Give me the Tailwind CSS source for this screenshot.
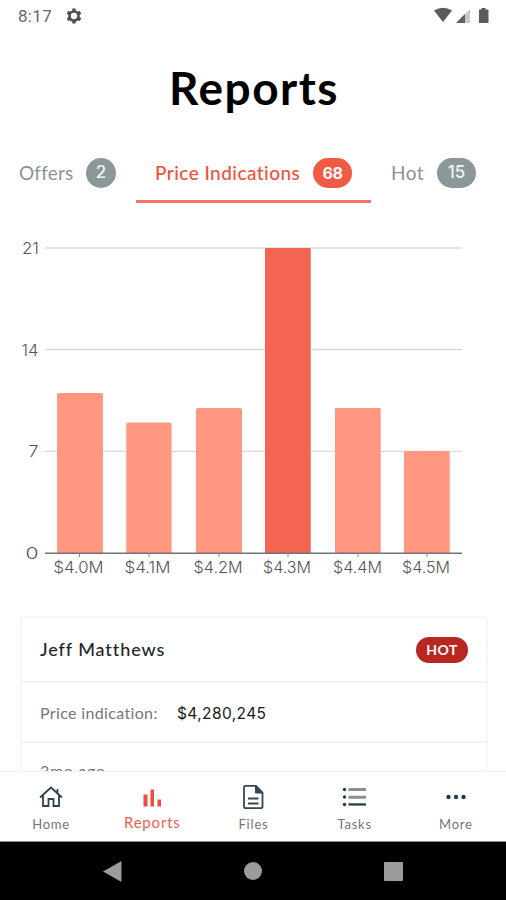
<!DOCTYPE html>
<html lang="en">
<head>
<meta charset="utf-8">
<title>Reports</title>
<script src="https://cdn.jsdelivr.net/npm/@tailwindcss/browser@4"></script>
</head>
<body class="bg-white">
<div class="w-[506px] h-[900px] overflow-hidden flex flex-col bg-white font-['Lato',sans-serif]">
  <header class="h-8 shrink-0 flex items-center pl-[18px] pr-[16px] text-[#686868]">
    <span class="font-['Roboto',sans-serif] text-[17px] leading-8 tracking-[0.3px]">8:17</span>
    <svg class="ml-[13px] -mt-px" width="18" height="18" viewBox="0 0 24 24" fill="none" stroke="#505050"><circle cx="12" cy="12" r="6" stroke-width="3.6"/><path d="M12 2v4M12 18v4M3.4 7l3.4 2M17.2 15l3.4 2M3.4 17l3.4-2M17.2 9l3.4-2" stroke-width="4.6"/></svg>
    <svg class="ml-auto -mt-px" width="57" height="18" viewBox="0 0 57 18"><path d="M1 3.5Q10 -2 19 3.5L10 15Z" fill="#5b5b5b"/><path d="M23 16L37 2V16Z" fill="#c9c9c9"/><path d="M23 16L32 7V16Z" fill="#626262"/><path d="M48.500 1h4v1.500h3V16H46V2.500H48.500Z" fill="#5b5b5b"/></svg>
  </header>

  <h1 class="h-[114px] shrink-0 pt-[27px] pl-[2px] text-center text-[46px] leading-[58px] font-bold tracking-[1.5px] text-black">Reports</h1>

  <nav class="h-[57px] shrink-0 flex items-stretch text-[19px] tracking-[0.45px] text-[#8b9393]">
    <div class="w-[136px] flex items-center justify-between pl-[19px] pr-[20px] pb-[3px]"><span class="tracking-[0.2px]">Offers</span><span class="h-[30px] w-[30px] rounded-full bg-[#8b9798] text-[#f0f3f3] font-['Inter',sans-serif] text-[17px] font-medium tracking-normal flex items-center justify-center">2</span></div>
    <div class="w-[235px] flex items-center justify-between pl-[19px] pr-[19px] border-b-[3px] border-[#f07564] text-[#ef513c] font-medium"><span>Price Indications</span><span class="h-[30px] w-[39px] rounded-full bg-[#f15b45] text-white font-['Inter',sans-serif] text-[16px] font-bold tracking-[-0.5px] flex items-center justify-center">68</span></div>
    <div class="w-[135px] flex items-center justify-between pl-[20px] pr-[30px] pb-[3px]"><span>Hot</span><span class="h-[30px] w-[39px] rounded-full bg-[#8b9798] text-[#f0f3f3] font-['Inter',sans-serif] text-[17px] font-medium tracking-normal flex items-center justify-center">15</span></div>
  </nav>

  <svg class="h-[413px] w-[506px] shrink-0 block font-['Inter',sans-serif] font-light" viewBox="0 203 506 413">
    <g stroke="#d9d9d9" stroke-width="1.3"><path d="M45 248H462M45 349.500H462M45 451.300H462"/></g>
    <g fill="#ff967f">
      <path d="M57 553V395q0-2 2-2h42q2 0 2 2V553Z"/>
      <path d="M126.300 553V424.500q0-2 2-2h41.300q2 0 2 2V553Z"/>
      <path d="M196 553V410q0-2 2-2h42q2 0 2 2V553Z"/>
      <path d="M265 553V249q0-1 1-1h43.700q1 0 1 1V553Z" fill="#f36552"/>
      <path d="M335 553V409q0-1 1-1h43.700q1 0 1 1V553Z"/>
      <path d="M404 553V452q0-1 1-1h43.700q1 0 1 1V553Z"/>
    </g>
    <path d="M45 553.300H462" stroke="#747474" stroke-width="1.400"/>
    <path d="M79.500 553v4M149 553v4M219 553v4M288 553v4M358 553v4M427 553v4" stroke="#8a8a8a"/>
    <g fill="#555" font-size="15.5">
      <text x="22" y="254" textLength="17" lengthAdjust="spacingAndGlyphs">21</text>
      <text x="21.500" y="356" textLength="17" lengthAdjust="spacingAndGlyphs">14</text>
      <text x="28.500" y="457" textLength="10" lengthAdjust="spacingAndGlyphs">7</text>
      <text x="25.500" y="559" textLength="13" lengthAdjust="spacingAndGlyphs">0</text>
    </g>
    <g fill="#555" font-size="15.5">
      <text x="53.500" y="573" textLength="50" lengthAdjust="spacingAndGlyphs">$4.0M</text>
      <text x="124.500" y="573" textLength="46" lengthAdjust="spacingAndGlyphs">$4.1M</text>
      <text x="193.500" y="573" textLength="49" lengthAdjust="spacingAndGlyphs">$4.2M</text>
      <text x="263" y="573" textLength="48" lengthAdjust="spacingAndGlyphs">$4.3M</text>
      <text x="333" y="573" textLength="49" lengthAdjust="spacingAndGlyphs">$4.4M</text>
      <text x="402" y="573" textLength="48" lengthAdjust="spacingAndGlyphs">$4.5M</text>
    </g>
  </svg>

  <main class="h-[155px] shrink-0 overflow-hidden pl-[20px] pr-[18px]">
    <section class="h-[220px] border-2 border-[#f6f6f6] rounded-[4px]">
      <div class="h-[65px] border-b-2 border-[#f2f2f2] pl-[18px] pr-[18px] flex items-center justify-between">
        <h2 class="text-[18px] tracking-[0.9px] font-medium text-[#202629]">Jeff Matthews</h2>
        <span class="h-[26px] w-[52px] rounded-full bg-[#b92820] text-white text-[14px] font-bold tracking-[0.5px] flex items-center justify-center">HOT</span>
      </div>
      <div class="h-[60px] border-b-2 border-[#f2f2f2] pl-[18px] flex items-baseline pt-[18px] leading-[24px] text-[16px]">
        <span class="w-[137px] text-[#777] tracking-[0.35px]">Price indication:</span><span class="font-['Inter',sans-serif] text-[15.5px] text-[#171b1d] tracking-[0.4px]">$4,280,245</span>
      </div>
      <div class="pl-[18px] pt-[16px] text-[16px] leading-[24px] tracking-[0.7px] text-[#777]">3mo ago</div>
    </section>
  </main>

  <nav class="h-[71px] shrink-0 border-t border-[#f1f1f1] grid grid-cols-5 text-[#747474] text-[13px] tracking-[0.8px] border-b border-b-[#888]">
    <div class="flex flex-col items-center pt-[12px]"><svg width="26" height="26" viewBox="0 0 26 26" fill="none" stroke="#2c4450" stroke-width="1.800"><path d="M2 13.500L13 3.500L24 13.500M5 11.500V22H10.500V15H15.500V22H21V11.500M19.500 9V5"/></svg><span class="leading-[16px] mt-[6px] pl-px">Home</span></div>
    <div class="flex flex-col items-center pt-[12px] text-[#f0604d] text-[15px]"><svg width="26" height="26" viewBox="0 0 26 26" fill="#ee5037"><path d="M4.500 10.500h4v12h-4zM11.500 5.500h3.500v17h-3.500zM18.500 15.500h3.500v7h-3.500z"/></svg><span class="leading-[16px] mt-[4px] pl-px">Reports</span></div>
    <div class="flex flex-col items-center pt-[12px]"><svg width="26" height="26" viewBox="0 0 26 26" fill="none" stroke="#34464f" stroke-width="1.800"><path d="M5.500 1.800H16L22.500 8.500V22.500Q22.500 24.200 20.800 24.200H5.700Q4 24.200 4 22.500V3.300Q4 1.800 5.500 1.800Z"/><path d="M15.500 2V9H22.500Z" fill="#34464f" stroke-width="1"/><path d="M8 14.500H18.500M8 19.500H18.500"/></svg><span class="leading-[16px] mt-[6px] pl-px">Files</span></div>
    <div class="flex flex-col items-center pt-[12px]"><svg width="26" height="26" viewBox="0 0 26 26" fill="#243c49"><circle cx="3.500" cy="5.500" r="1.700"/><circle cx="3.500" cy="13" r="1.700"/><circle cx="3.500" cy="20.500" r="1.700"/><path d="M7.500 4h17.500v3h-17.500zM7.500 11.700h17.500v3h-17.500z" fill="#8b8f91"/><path d="M7.500 19.300h17.500v2.300h-17.500z"/></svg><span class="leading-[16px] mt-[6px] pl-px">Tasks</span></div>
    <div class="flex flex-col items-center pt-[12px]"><svg width="26" height="26" viewBox="0 0 26 26" fill="#243c49"><circle cx="6.500" cy="13" r="2.200"/><circle cx="14" cy="13" r="2.200"/><circle cx="21.500" cy="13" r="2.200"/></svg><span class="leading-[16px] mt-[6px] pl-px">More</span></div>
  </nav>

  <footer class="h-[58px] shrink-0 bg-black flex items-center justify-between pl-[103px] pr-[103px]">
    <svg width="19" height="21" viewBox="0 0 19 21"><path d="M0 10.500L18.500 0V21Z" fill="#9b9b9b"/></svg>
    <div class="size-[18px] rounded-full bg-[#9b9b9b]"></div>
    <div class="size-[19px] rounded-[1px] bg-[#9b9b9b]"></div>
  </footer>
</div>
</body>
</html>
